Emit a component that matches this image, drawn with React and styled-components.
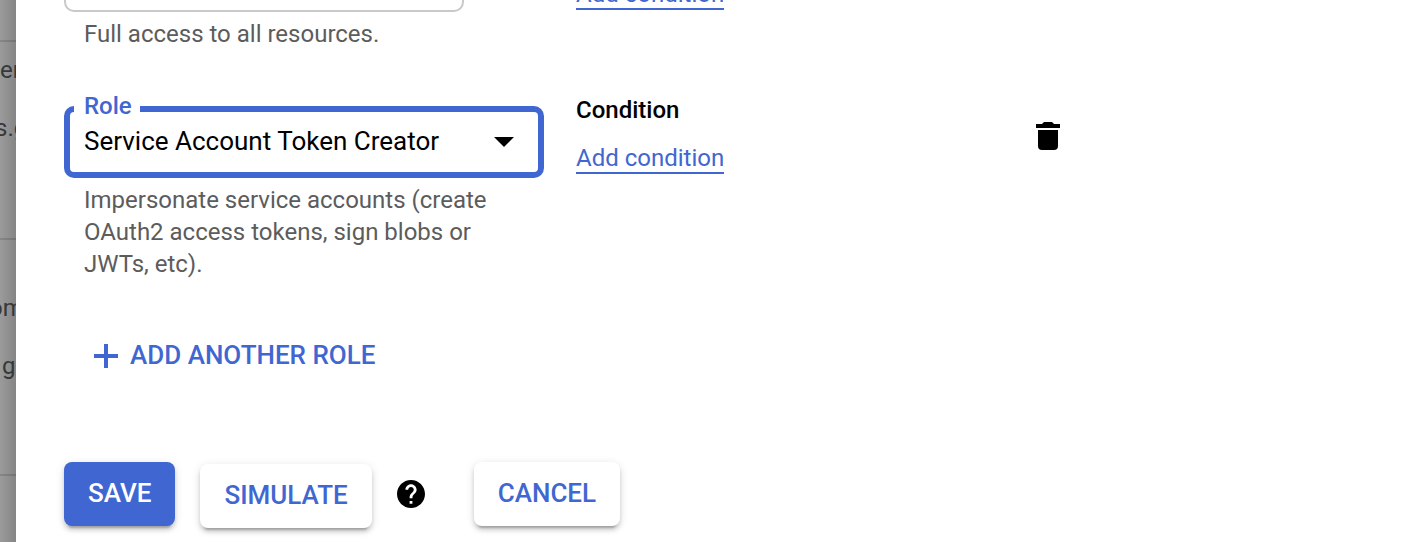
import React from 'react';
import styled, { createGlobalStyle, css } from 'styled-components';

const BLUE = '#4067d1';

const GlobalStyle = createGlobalStyle`
  *, *::before, *::after { box-sizing: border-box; }
  body {
    margin: 0;
    background: #fff;
    color: #000;
    font-family: Roboto, "Liberation Sans", sans-serif;
    font-size: 24px;
    line-height: 32px;
  }
  button, select { font: inherit; }
`;

const Page = styled.div`
  display: flex;
  min-height: 100vh;
  overflow: hidden;
`;

const Backdrop = styled.aside`
  flex: none;
  width: 16px;
  padding-top: 40px;
  overflow: hidden;
  color: #373839;
  white-space: nowrap;
  background: linear-gradient(to right, #9b9b9b, #858585);
`;

const BackdropRow = styled.div`
  display: flex;
  flex-direction: column;
  justify-content: center;
  gap: 26px;
  height: ${(p) => p.$height}px;
  padding-bottom: ${(p) => p.$space}px;
  border-top: 2px solid rgba(0, 0, 0, 0.13);
`;

const Fragment = styled.span`
  text-indent: ${(p) => p.$indent}px;
`;

const Panel = styled.main`
  flex: 1;
  min-width: 0;
  height: 100vh;
  overflow: hidden;
  padding: 0 48px;
  background: #fff;
`;

/* The form is scrolled so that its first row is partly above the panel. */
const Form = styled.form`
  margin-top: -70px;
`;

const Rows = styled.div`
  display: flex;
  flex-direction: column;
  gap: 44px;
`;

const RoleRow = styled.div`
  display: grid;
  grid-template-columns: 480px 428px auto;
  justify-content: start;
  align-items: start;
  column-gap: 32px;
`;

const Field = styled.div`
  padding-top: 12px;
`;

const SelectBox = styled.div`
  position: relative;
  display: flex;
  width: ${(p) => (p.$active ? 480 : 400)}px;
  height: ${(p) => (p.$active ? 72 : 70)}px;
  border: ${(p) => (p.$active ? `6px solid ${BLUE}` : '2px solid #c9c9c9')};
  border-radius: 10px;
`;

const FieldLabel = styled.label`
  position: absolute;
  top: -22px;
  left: 4px;
  padding: 0 8px 0 10px;
  background: #fff;
  color: ${BLUE};
  font-weight: 500;
`;

const Select = styled.select`
  flex: 1;
  min-width: 0;
  padding: 0 60px 2px 14px;
  border: 0;
  outline: 0;
  appearance: none;
  background: transparent;
  color: #000;
  font-size: 26px;
`;

const Caret = styled.svg`
  position: absolute;
  right: 24px;
  top: 25px;
  pointer-events: none;
`;

const Hint = styled.p`
  margin: 6px 0 0;
  padding: 0 20px;
  max-width: 460px;
  color: #5c5c5c;
`;

const Condition = styled.div`
  display: flex;
  flex-direction: column;
  align-items: flex-start;
  gap: 18px;
`;

const ConditionTitle = styled.span`
  font-weight: 500;
`;

const Link = styled.a`
  border-bottom: 2px solid ${BLUE};
  color: ${BLUE};
  line-height: 28px;
  text-decoration: none;
`;

const IconButton = styled.button`
  display: flex;
  align-items: center;
  padding: 0;
  border: 0;
  background: none;
  color: #000;
`;

const DeleteButton = styled(IconButton)`
  margin-top: 28px;
`;

const HelpButton = styled(IconButton)`
  height: 64px;
  margin-right: 24px;
`;

const buttonText = css`
  height: 64px;
  border: 0;
  border-radius: 8px;
  font-size: 26px;
  font-weight: 500;
`;

const AddButton = styled.button`
  ${buttonText}
  display: flex;
  align-items: center;
  gap: 12px;
  margin-top: 44px;
  padding: 0 30px;
  background: none;
  color: ${BLUE};
`;

const AddLabel = styled.span`
  padding-bottom: 2px;
`;

const Actions = styled.div`
  display: flex;
  align-items: flex-start;
  gap: 25px;
  margin-top: 74px;
`;

const Button = styled.button`
  ${buttonText}
  padding: 0 24px 2px;
  background: ${(p) => (p.$primary ? BLUE : '#fff')};
  color: ${(p) => (p.$primary ? '#fff' : BLUE)};
  box-shadow:
    0 6px 2px -4px rgba(0, 0, 0, 0.2),
    0 4px 4px 0 rgba(0, 0, 0, 0.14),
    0 2px 10px 0 rgba(0, 0, 0, 0.12);
`;

const SimulateSlot = styled.div`
  display: flex;
  padding-top: 2px;
`;

function DeleteIcon() {
  return (
    <svg width="24" height="28" viewBox="0 0 24 28" fill="currentColor" aria-hidden="true">
      <path d="M0 2h6l2-2h8l2 2h6v4H0zM2 8h20v16a4 4 0 0 1-4 4H6a4 4 0 0 1-4-4z" />
    </svg>
  );
}

function HelpIcon() {
  return (
    <svg width="28" height="28" viewBox="2 2 20 20" fill="currentColor" aria-hidden="true">
      <path d="M12 2C6.48 2 2 6.48 2 12s4.48 10 10 10 10-4.48 10-10S17.52 2 12 2zm1 17h-2v-2h2v2zm2.07-7.75-.9.92C13.45 12.9 13 13.5 13 15h-2v-.5c0-1.1.45-2.1 1.17-2.83l1.24-1.26c.37-.36.59-.86.59-1.41 0-1.1-.9-2-2-2s-2 .9-2 2H8c0-2.21 1.79-4 4-4s4 1.79 4 4c0 .88-.36 1.68-.93 2.25z" />
    </svg>
  );
}

function PlusIcon() {
  return (
    <svg width="24" height="24" viewBox="0 0 24 24" fill="currentColor" aria-hidden="true">
      <path d="M10 0h4v10h10v4H14v10h-4V14H0v-4h10z" />
    </svg>
  );
}

const backdropRows = [
  { height: 198, space: 82, cells: [['en', 0], ['s.g', -5]] },
  { height: 236, space: 40, cells: [['om', -11], ['g', 2]] },
  { height: 68, space: 0, cells: [] },
];

export default function App() {
  return (
    <Page>
      <GlobalStyle />
      <Backdrop>
        {backdropRows.map((row) => (
          <BackdropRow key={row.height} $height={row.height} $space={row.space}>
            {row.cells.map(([text, indent]) => (
              <Fragment key={text} $indent={indent}>{text}</Fragment>
            ))}
          </BackdropRow>
        ))}
      </Backdrop>
      <Panel>
        <Form onSubmit={(e) => e.preventDefault()}>
          <Rows>
            <RoleRow>
              <Field>
                <SelectBox>
                  <Select aria-label="Role" />
                </SelectBox>
                <Hint>Full access to all resources.</Hint>
              </Field>
              <Condition>
                <ConditionTitle>Condition</ConditionTitle>
                <Link href="#condition-1">Add condition</Link>
              </Condition>
            </RoleRow>
            <RoleRow>
              <Field>
                <SelectBox $active>
                  <FieldLabel htmlFor="role">Role</FieldLabel>
                  <Select id="role">
                    <option>Service Account Token Creator</option>
                  </Select>
                  <Caret width="20" height="10" viewBox="0 0 20 10" aria-hidden="true">
                    <path d="M0 0h20L10 10z" />
                  </Caret>
                </SelectBox>
                <Hint>
                  Impersonate service accounts (create OAuth2 access tokens, sign blobs or JWTs, etc).
                </Hint>
              </Field>
              <Condition>
                <ConditionTitle>Condition</ConditionTitle>
                <Link href="#condition-2">Add condition</Link>
              </Condition>
              <DeleteButton type="button" aria-label="Delete role">
                <DeleteIcon />
              </DeleteButton>
            </RoleRow>
          </Rows>
          <AddButton type="button">
            <PlusIcon />
            <AddLabel>ADD ANOTHER ROLE</AddLabel>
          </AddButton>
          <Actions>
            <Button type="submit" $primary>SAVE</Button>
            <SimulateSlot>
              <Button type="button">SIMULATE</Button>
            </SimulateSlot>
            <HelpButton type="button" aria-label="Help">
              <HelpIcon />
            </HelpButton>
            <Button type="button">CANCEL</Button>
          </Actions>
        </Form>
      </Panel>
    </Page>
  );
}
